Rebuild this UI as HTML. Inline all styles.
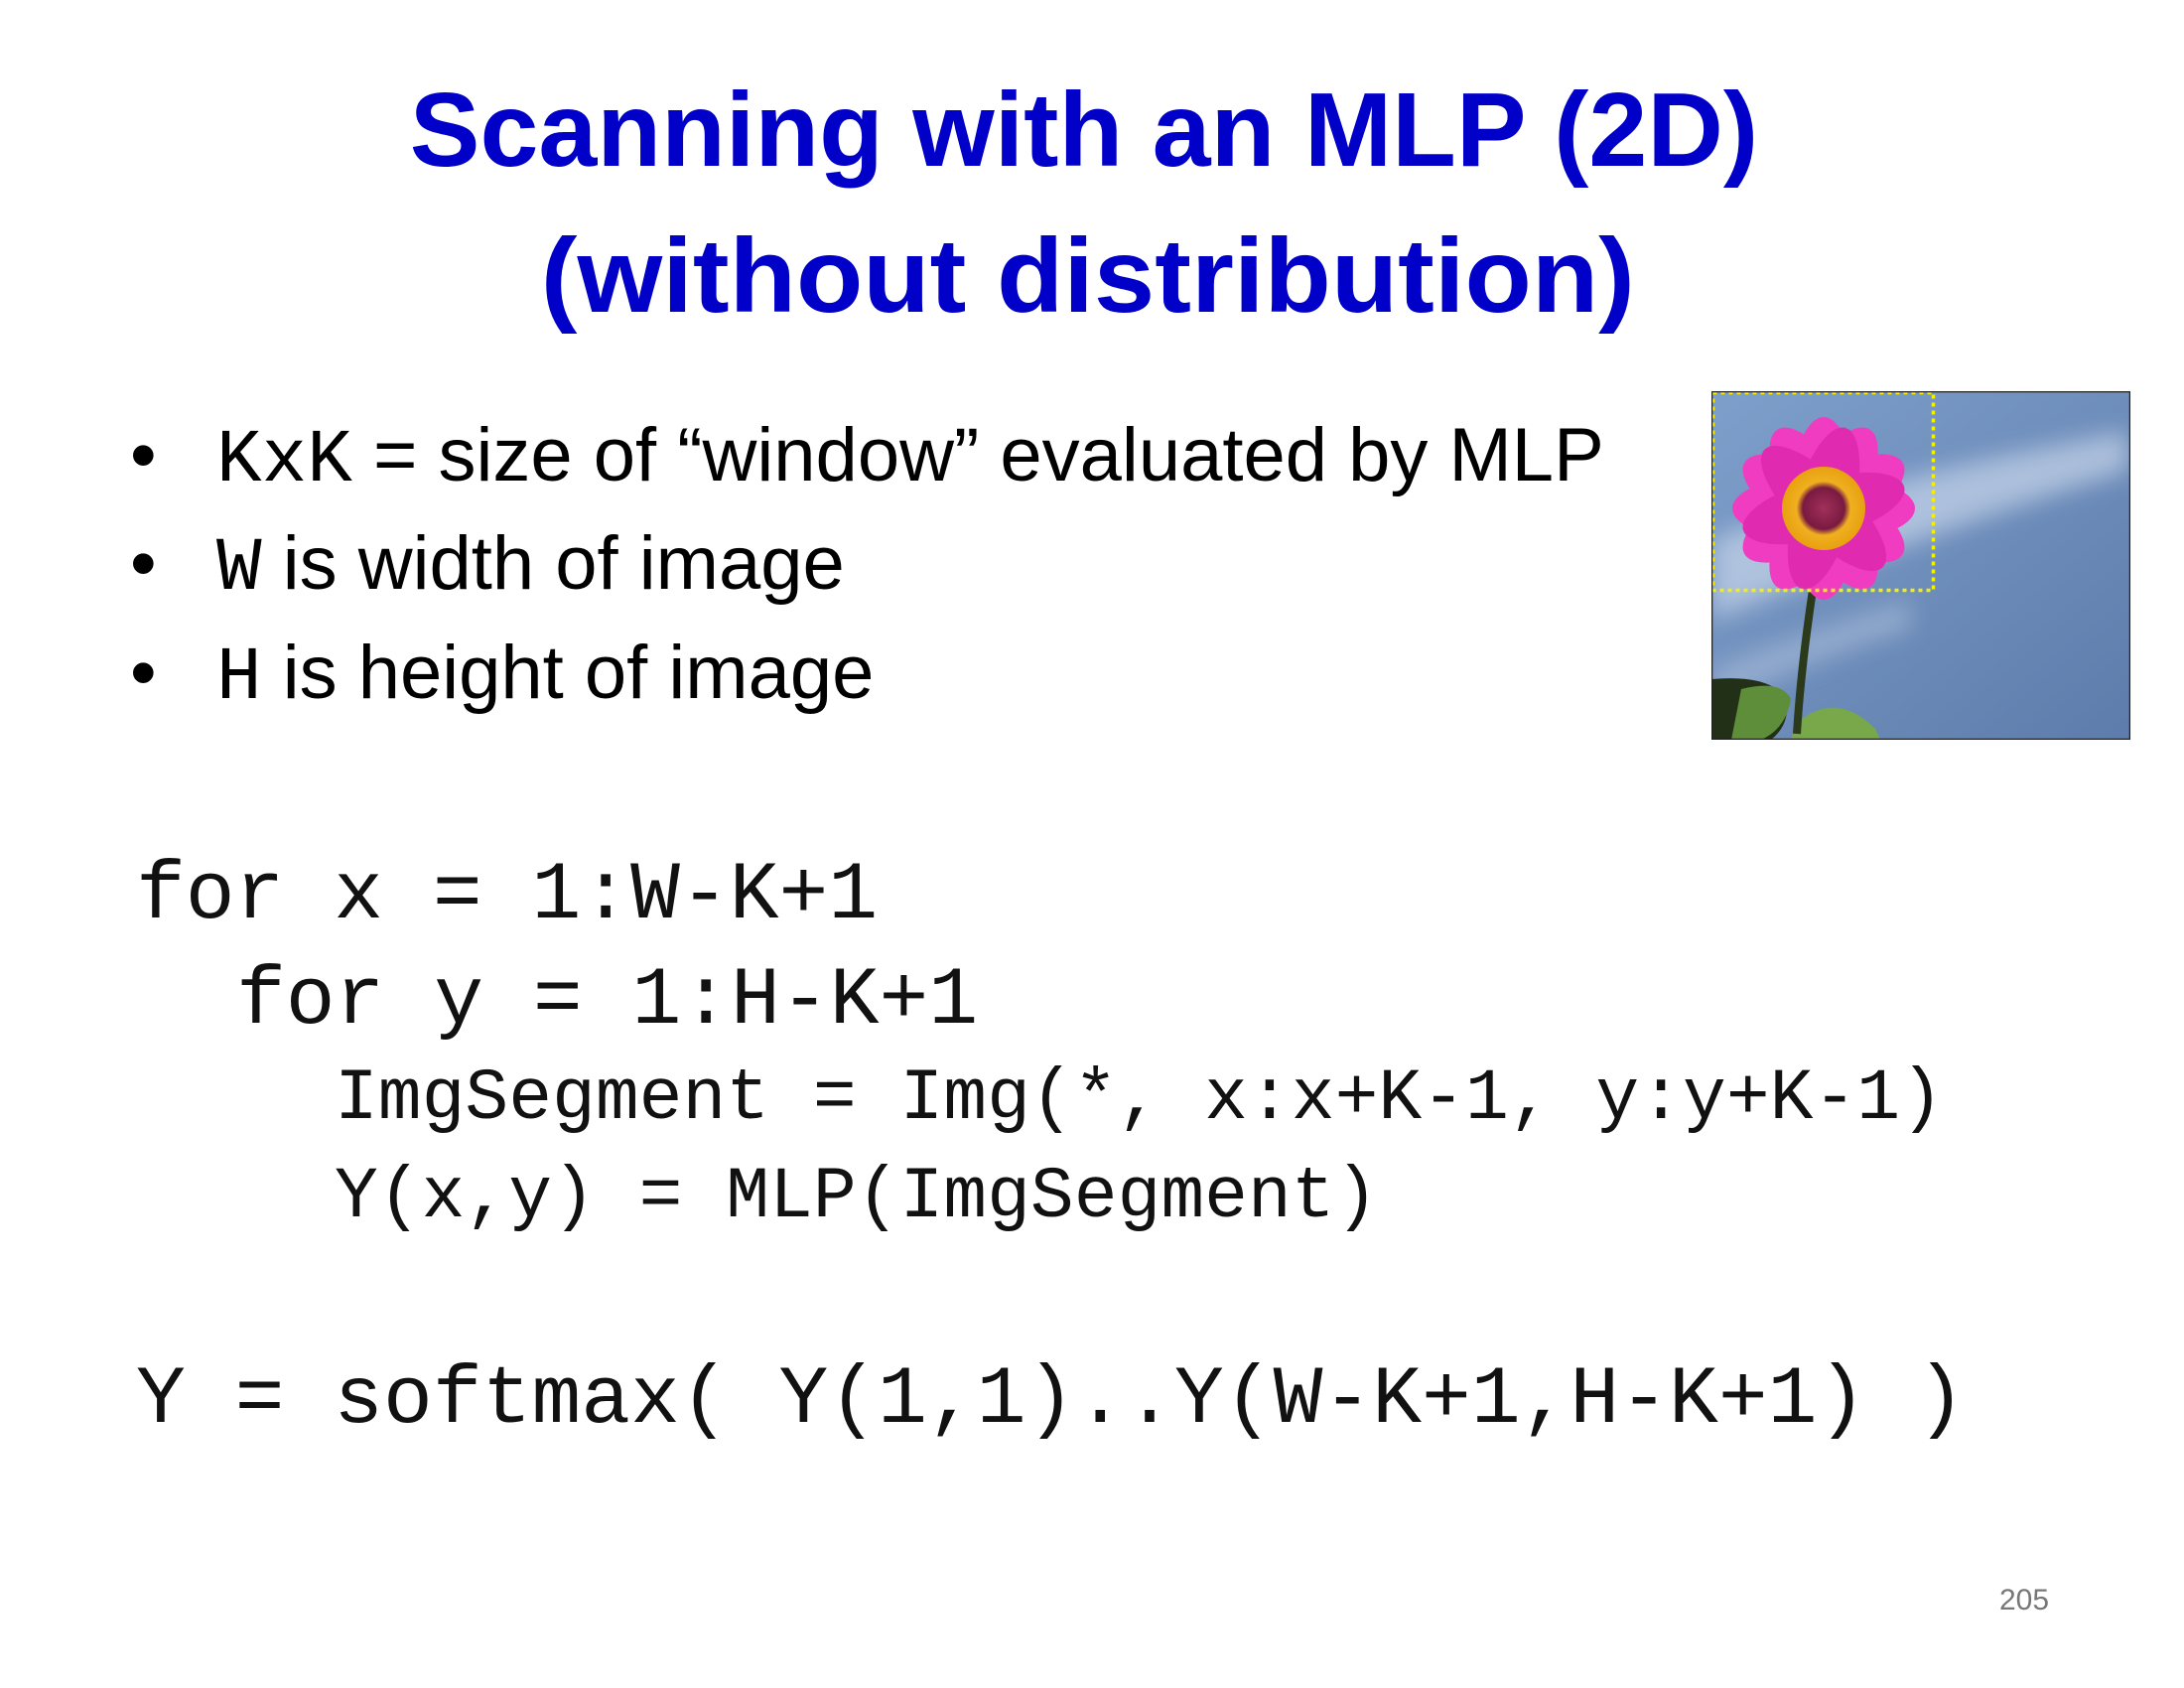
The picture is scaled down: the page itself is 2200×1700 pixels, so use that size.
<!DOCTYPE html>
<html><head><meta charset="utf-8"><style>
body{margin:0;width:2200px;height:1700px;background:#fff;position:relative;overflow:hidden;font-family:"Liberation Sans",sans-serif}
.a{position:absolute;line-height:1;white-space:pre}
.t{font-weight:bold;color:#0000c8;font-size:106px;left:0;width:2200px;text-align:center}
.t span{display:inline-block;transform-origin:center}
.b{font-size:76px;color:#000}
.m{font-family:"Liberation Mono",monospace}
.c{font-family:"Liberation Mono",monospace;color:#111}
</style></head><body>
<div class="a t" style="top:78px;left:-8px"><span style="transform:scaleX(1.0)">Scanning with an MLP (2D)</span></div>
<div class="a t" style="top:225px;left:-4px"><span style="transform:scaleX(1.04)">(without distribution)</span></div>

<div class="a b" style="left:131px;top:421px">•</div>
<div class="a b" style="left:131px;top:530px">•</div>
<div class="a b" style="left:131px;top:640px">•</div>
<div class="a b" style="left:218px;top:421px"><span class="m">KxK</span> = size of “window” evaluated by MLP</div>
<div class="a b" style="left:218px;top:530px"><span class="m">W</span> is width of image</div>
<div class="a b" style="left:218px;top:640px"><span class="m">H</span> is height of image</div>

<div class="a c" style="left:137px;top:861px;font-size:83px">for x = 1:W-K+1</div>
<div class="a c" style="left:238px;top:967px;font-size:83px">for y = 1:H-K+1</div>
<div class="a c" style="left:337px;top:1070px;font-size:73px">ImgSegment = Img(*, x:x+K-1, y:y+K-1)</div>
<div class="a c" style="left:337px;top:1169px;font-size:73px">Y(x,y) = MLP(ImgSegment)</div>
<div class="a c" style="left:137px;top:1369px;font-size:83px">Y = softmax( Y(1,1)..Y(W-K+1,H-K+1) )</div>

<div class="a" style="left:2014px;top:1597px;font-size:30px;color:#777">205</div>

<svg style="position:absolute;left:1724px;top:394px" width="422" height="351" viewBox="0 0 422 351">
<defs>
<linearGradient id="sky" x1="0" y1="0" x2="1" y2="1"><stop offset="0" stop-color="#7f9fcb"/><stop offset="1" stop-color="#5d7cab"/></linearGradient>
<radialGradient id="cen"><stop offset="0" stop-color="#a0305a"/><stop offset="0.5" stop-color="#7a1a40"/><stop offset="0.65" stop-color="#f0b020"/><stop offset="1" stop-color="#e8a010"/></radialGradient>
<filter id="bl"><feGaussianBlur stdDeviation="12"/></filter>
</defs>
<rect width="422" height="351" fill="url(#sky)"/>
<path d="M0 150 Q150 90 420 40 L420 80 Q250 130 0 230Z" fill="#c8d6ea" opacity="0.7" filter="url(#bl)"/>
<path d="M0 280 Q100 240 200 210 L200 240 Q100 270 0 320Z" fill="#b8c8e0" opacity="0.5" filter="url(#bl)"/>
<path d="M0 290 Q60 285 75 310 Q80 335 60 351 L0 351Z" fill="#233018"/>
<path d="M30 300 Q70 290 80 310 Q75 340 50 351 L20 351Z" fill="#5f8e3a"/>
<path d="M85 335 Q125 300 165 340 L170 351 L80 351Z" fill="#78a84a"/>
<path d="M102 200 Q90 280 86 345" stroke="#2a3a1a" stroke-width="8" fill="none"/>
<g transform="translate(113,118)" fill="#f03cc0">
<ellipse rx="34" ry="92" transform="rotate(0)"/>
<ellipse rx="34" ry="92" transform="rotate(30)"/>
<ellipse rx="34" ry="92" transform="rotate(60)"/>
<ellipse rx="34" ry="92" transform="rotate(90)"/>
<ellipse rx="34" ry="92" transform="rotate(120)"/>
<ellipse rx="34" ry="92" transform="rotate(150)"/>
<ellipse rx="30" ry="84" transform="rotate(15)" fill="#e02ab0"/>
<ellipse rx="30" ry="84" transform="rotate(75)" fill="#e02ab0"/>
<ellipse rx="30" ry="84" transform="rotate(135)" fill="#e02ab0"/>
<circle r="42" fill="url(#cen)"/>
</g>
<rect x="1.5" y="1.5" width="222" height="199" fill="none" stroke="#f5f000" stroke-width="3.5" stroke-dasharray="4 4"/>
<rect x="0.5" y="0.5" width="421" height="350" fill="none" stroke="#222" stroke-width="1.5"/>
</svg>
</body></html>
